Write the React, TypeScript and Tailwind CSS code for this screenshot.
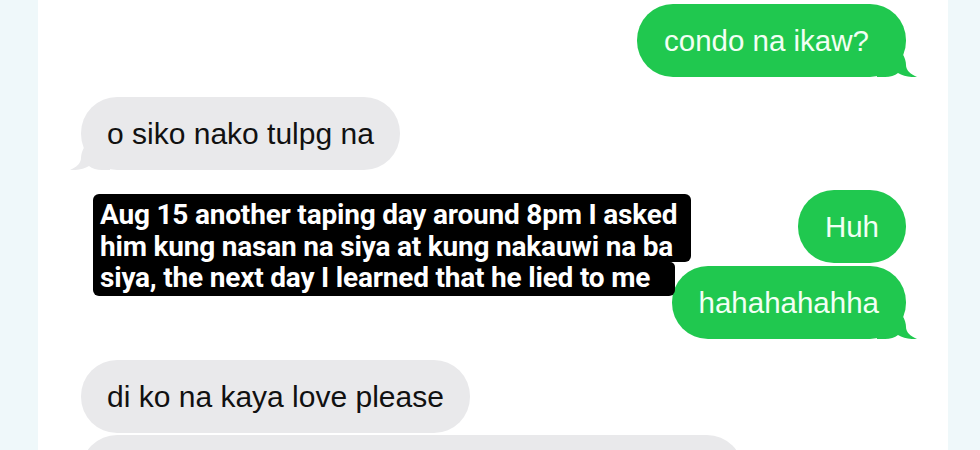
import React from "react";

function RightTail({ color }: { color: string }) {
  return (
    <svg
      className="absolute bottom-0 right-[-11px]"
      width="40"
      height="24"
      viewBox="0 0 40 24"
    >
      <path
        d="M0 0 H25 C28 4 29 9 29 12 C29 17 33 21 40 24 C33 24.5 26 23 21 20 C18 22.5 13 24 8 24 H0 Z"
        fill={color}
      />
    </svg>
  );
}

function LeftTail({ color }: { color: string }) {
  return (
    <svg
      className="absolute bottom-0 left-[-11px] -scale-x-100"
      width="40"
      height="24"
      viewBox="0 0 40 24"
    >
      <path
        d="M0 0 H25 C28 4 29 9 29 12 C29 17 33 21 40 24 C33 24.5 26 23 21 20 C18 22.5 13 24 8 24 H0 Z"
        fill={color}
      />
    </svg>
  );
}

function Green({ text, tail, wide }: { text: string; tail?: boolean; wide?: boolean }) {
  return (
    <div
      className={
        wide
          ? "relative shrink-0 self-end rounded-[36px] bg-[#20c84f] py-[19px] pl-[27px] pr-[37px] text-[29.5px] leading-[35px] text-[#f2fff4]"
          : "relative shrink-0 self-end rounded-[36px] bg-[#20c84f] px-[27px] py-[19px] text-[29.5px] leading-[35px] text-[#f2fff4]"
      }
    >
      <span className="relative z-10 whitespace-nowrap">{text}</span>
      {tail && <RightTail color="#20c84f" />}
    </div>
  );
}

function Gray({ text, tail }: { text: string; tail?: boolean }) {
  return (
    <div className="relative shrink-0 self-start rounded-[36px] bg-[#e9e9eb] px-[26px] py-[19px] text-[30px] leading-[35px] text-[#111111]">
      <span className="relative z-10 whitespace-nowrap">{text}</span>
      {tail && <LeftTail color="#e9e9eb" />}
    </div>
  );
}

export default function App() {
  return (
    <div
      className="flex h-[450px] w-[980px] overflow-hidden bg-[#eff8fa]"
      style={{ fontFamily: '"Liberation Sans", Arial, sans-serif' }}
    >
      <div className="w-[38px] shrink-0 bg-[#eff8fa]" />
      <div className="relative flex w-[910px] shrink-0 flex-col bg-white pl-[43px] pr-[42px] pt-[4px]">
        <Green text="condo na ikaw?" tail wide />
        <div className="h-[20px] shrink-0" />
        <Gray text="o siko nako tulpg na" tail />
        <div className="h-[20px] shrink-0" />
        <Green text="Huh" />
        <div className="h-[3px] shrink-0" />
        <Green text="hahahahahha" tail />
        <div className="h-[21px] shrink-0" />
        <Gray text="di ko na kaya love please" />
        <div className="h-[2px] shrink-0" />
        <div className="h-[73px] w-[662px] shrink-0 rounded-[36px] bg-[#e9e9eb]" />

        <div
          className="absolute left-[55px] top-[194px] z-20 flex flex-col items-start text-[28px] font-bold leading-[31.5px] tracking-[-0.2px] text-white"
          style={{ fontFamily: 'Roboto, "Liberation Sans", sans-serif' }}
        >
          <div className="w-[598px] rounded-t-[6px] rounded-br-[6px] bg-black px-[7px] pt-[5px] whitespace-nowrap">
            <div>Aug 15 another taping day around 8pm I asked</div>
            <div>him kung nasan na siya at kung nakauwi na ba</div>
          </div>
          <div className="w-[582px] rounded-b-[6px] rounded-tr-[5px] bg-black px-[7px] pb-[2px] whitespace-nowrap">
            siya, the next day I learned that he lied to me
          </div>
        </div>
      </div>
      <div className="flex-1 bg-[#eff8fa]" />
    </div>
  );
}
